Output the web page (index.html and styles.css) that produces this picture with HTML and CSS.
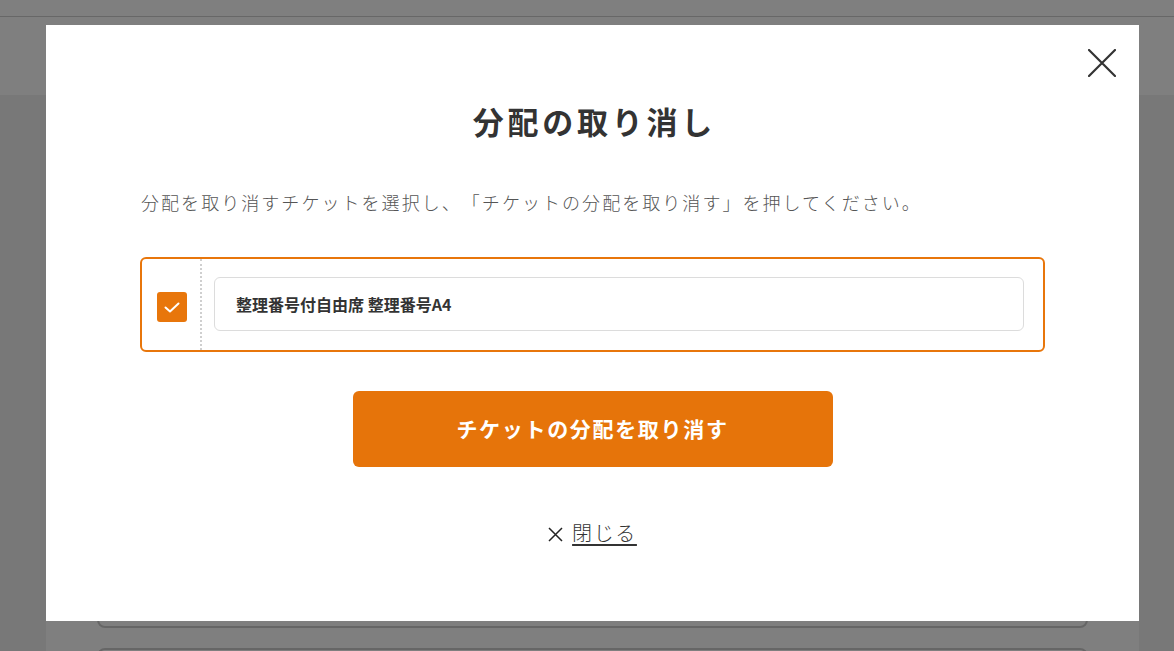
FILE: index.html
```html
<!DOCTYPE html>
<html lang="ja">
<head>
<meta charset="utf-8">
<title>分配の取り消し</title>
<link rel="stylesheet" href="styles.css">
</head>
<body>
<div class="page">
  <header class="site-header">
    <div class="header-top"></div>
    <div class="header-main"></div>
  </header>
  <main class="container">
    <div class="card card-a"></div>
    <div class="card card-b"></div>
  </main>
</div>

<div class="overlay"></div>

<div class="modal" role="dialog">
  <button class="modal-close" aria-label="閉じる">
    <svg width="28" height="28" viewBox="0 0 28 28"><path d="M1 1 L27 27 M27 1 L1 27" stroke="#333" stroke-width="2.2" stroke-linecap="round" fill="none"/></svg>
  </button>
  <h1 class="modal-title">分配の取り消し</h1>
  <p class="modal-desc">分配を取り消すチケットを選択し、「チケットの分配を取り消す」を押してください。</p>
  <div class="ticket-list">
    <div class="ticket-row">
      <div class="ticket-check">
        <span class="checkbox">
          <svg width="18" height="13" viewBox="0 0 18 13"><path d="M2.5 6.5 L7 10.5 L15.5 2.5" stroke="#fff" stroke-width="2" fill="none" stroke-linecap="round" stroke-linejoin="round"/></svg>
        </span>
      </div>
      <div class="ticket-sep"></div>
      <div class="ticket-body">
        <div class="ticket-name">整理番号付自由席 整理番号A4</div>
      </div>
    </div>
  </div>
  <div class="action">
    <button class="btn-primary">チケットの分配を取り消す</button>
  </div>
  <div class="close-row">
    <a class="close-link" href="#">
      <svg class="close-x" width="15" height="15" viewBox="0 0 15 15"><path d="M1 1 L14 14 M14 1 L1 14" stroke="#222" stroke-width="1.5" fill="none"/></svg>
      <span class="close-text">閉じる</span>
    </a>
  </div>
</div>
</body>
</html>
```

FILE: styles.css
```css
html, body {
  margin: 0;
  padding: 0;
}
body {
  background: #f1f1f1;
  font-family: "Noto Sans CJK JP", "Noto Sans", sans-serif;
  color: #333;
  overflow: hidden;
  text-spacing-trim: space-all;
}
.page {
  width: 1174px;
  height: 651px;
  overflow: hidden;
}
.site-header {
  background: #fff;
}
.header-top {
  height: 16px;
  border-bottom: 1px solid #cfcfcf;
}
.header-main {
  height: 78px;
}
.container {
  width: 1093px;
  margin-left: 46px;
  background: #fff;
  height: 556px;
  padding: 0 51px;
  box-sizing: border-box;
  display: flex;
  flex-direction: column;
  gap: 20px;
  overflow: hidden;
}
.card {
  border: 2px solid #cdcdcd;
  border-radius: 8px;
  height: 80px;
  flex-shrink: 0;
}
.card-a {
  margin-top: 449px;
}
.overlay {
  position: fixed;
  inset: 0;
  background: rgba(0, 0, 0, 0.5);
}
.modal {
  position: fixed;
  top: 25px;
  left: 46px;
  width: 1093px;
  height: 596px;
  background: #fff;
  box-sizing: border-box;
  padding: 0 94px;
}
.modal-close {
  position: absolute;
  top: 24px;
  right: 23px;
  width: 28px;
  height: 28px;
  padding: 0;
  border: 0;
  background: none;
  display: block;
}
.modal-close svg {
  display: block;
}
.modal-title {
  margin: 74px 0 0;
  font-size: 31px;
  line-height: 44px;
  font-weight: 700;
  letter-spacing: 0.12em;
  text-indent: 0.12em;
  text-align: center;
  color: #333;
}
.modal-desc {
  margin: 45px 0 0;
  font-size: 18px;
  line-height: 28px;
  font-weight: 300;
  letter-spacing: 2.05px;
  color: #555;
  padding-left: 1px;
  text-spacing-trim: space-all;
}
.ticket-list {
  margin-top: 41px;
}
.ticket-row {
  display: flex;
  border: 2px solid #e8760b;
  border-radius: 6px;
}
.ticket-check {
  display: flex;
  align-items: center;
  padding: 5px 13px 0 15px;
}
.checkbox {
  width: 30px;
  height: 30px;
  border-radius: 3px;
  background: #e8760b;
  display: flex;
  align-items: center;
  justify-content: center;
}
.checkbox svg {
  display: block;
}
.ticket-sep {
  border-left: 2px dotted #cfcfcf;
}
.ticket-body {
  flex: 1;
  padding: 18px 19px 19px 12px;
}
.ticket-name {
  height: 54px;
  box-sizing: border-box;
  border: 1px solid #dcdcdc;
  border-radius: 6px;
  padding: 0 21px;
  display: flex;
  align-items: center;
  font-size: 16px;
  font-weight: 700;
  color: #333;
}
.action {
  margin-top: 39px;
  display: flex;
  justify-content: center;
}
.btn-primary {
  width: 480px;
  height: 76px;
  border: 0;
  border-radius: 6px;
  background: #e6740a;
  color: #fff;
  font-family: "Noto Sans CJK JP", "Noto Sans", sans-serif;
  font-size: 21px;
  font-weight: 700;
  letter-spacing: 0.08em;
  padding: 0 0 3px;
}
.close-row {
  margin-top: 51px;
  display: flex;
  justify-content: center;
}
.close-link {
  display: flex;
  align-items: center;
  gap: 9px;
  color: #333;
  text-decoration: none;
  font-size: 20px;
  line-height: 30px;
  font-weight: 300;
  letter-spacing: 0.08em;
}
.close-x {
  display: block;
  margin-top: 2px;
}
.close-text {
  text-decoration: underline;
  text-decoration-thickness: 2px;
  text-underline-offset: 3px;
}
```
